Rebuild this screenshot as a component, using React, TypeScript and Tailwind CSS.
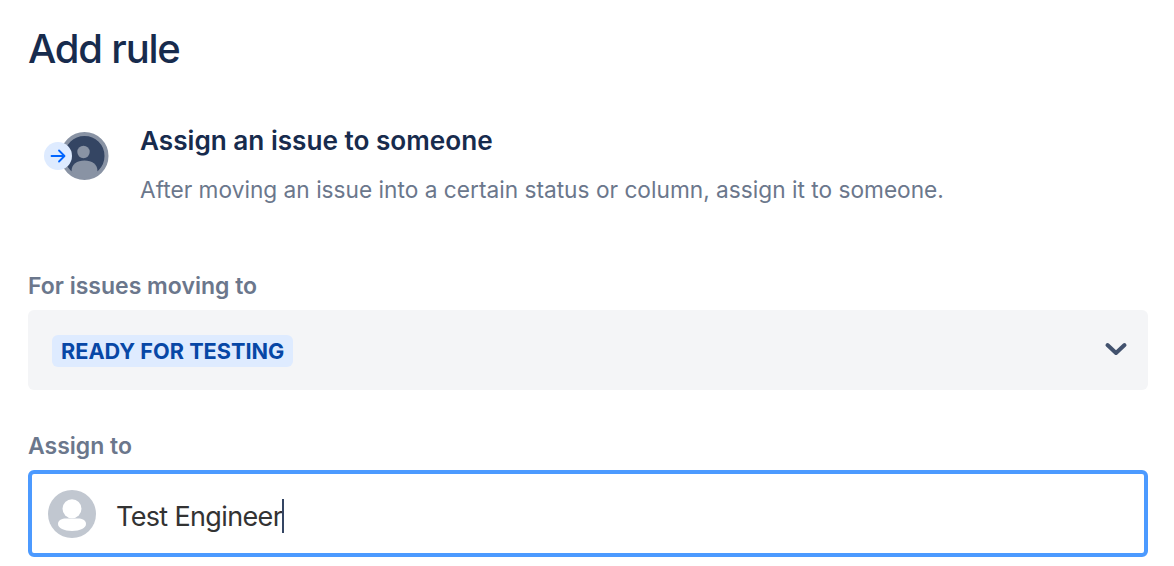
const font = { fontFamily: "Inter, 'Noto Sans', sans-serif" };

function RuleIcon() {
  return (
    <svg width="70" height="52" viewBox="0 0 70 52" className="shrink-0">
      <circle cx="42.5" cy="26" r="22" fill="#344563" stroke="#8993A4" strokeWidth="4" />
      <circle cx="41.5" cy="22" r="6.2" fill="#8993A4" />
      <path d="M29.5 41.5 C29.5 34 35 30.5 42.5 30.5 C50 30.5 55.5 34 55.5 41.5 C52.5 45.5 47.5 47.5 42.5 47.5 C37.5 47.5 32.5 45.5 29.5 41.5 Z" fill="#8993A4" />
      <circle cx="16" cy="26" r="14" fill="#DEEBFF" />
      <path d="M9.5 26 H22 M17 20.5 L22.5 26 L17 31.5" fill="none" stroke="#0065FF" strokeWidth="1.8" strokeLinecap="round" strokeLinejoin="round" />
    </svg>
  );
}

function UserAvatar() {
  return (
    <svg width="48" height="48" viewBox="0 0 48 48" className="shrink-0">
      <circle cx="24" cy="24" r="24" fill="#C1C7D0" />
      <circle cx="24" cy="18.7" r="9.5" fill="#fff" />
      <path d="M10 34 C10 30 14 28.5 18 28.5 H30 C34 28.5 38 30 38 34 C38 38 32 41 24 41 C16 41 10 38 10 34 Z" fill="#fff" />
    </svg>
  );
}

export default function App() {
  return (
    <div className="h-[566px] w-[1174px] overflow-hidden bg-white pl-[28px] pr-[26px] pt-[25px]" style={font}>
      <h1 className="text-[40px] font-[550] leading-[48px] tracking-[-1.2px] text-[#172b4d]">Add rule</h1>

      <div className="mt-[50px] flex h-[79px] items-start">
        <div className="mt-[7px] w-[112px] pl-[14px]">
          <RuleIcon />
        </div>
        <div>
          <h2 className="text-[26.15px] font-semibold leading-[36px] text-[#172b4d]">Assign an issue to someone</h2>
          <p className="mt-[17px] text-[22.7px] leading-[28px] text-[#6b778c]">
            After moving an issue into a certain status or column, assign it to someone.
          </p>
        </div>
      </div>

      <label className="mt-[68px] block text-[23px] font-semibold leading-[32px] text-[#6b778c]">For issues moving to</label>
      <div className="mt-[8px] flex h-[80px] items-center justify-between rounded-[6px] bg-[#f4f5f7] pl-[24px] pr-[20px]">
        <span className="mt-[2px] rounded-[6px] bg-[#deebff] px-[9px] text-[21.7px] font-bold leading-[32px] text-[#0747a6]">READY FOR TESTING</span>
        <svg width="24" height="16" viewBox="0 0 24 16" className="mb-[2px]">
          <path d="M3.5 4 L12 12 L20.5 4" fill="none" stroke="#42526E" strokeWidth="4" strokeLinecap="round" strokeLinejoin="round" />
        </svg>
      </div>

      <label className="mt-[40px] block text-[23px] font-semibold leading-[32px] text-[#6b778c]">Assign to</label>
      <div className="mt-[8px] flex h-[87px] items-center rounded-[6px] border-[4px] border-[#4c9aff] pl-[16px]">
        <UserAvatar />
        <span className="ml-[20px] pt-[6px] text-[27px] leading-[36px] tracking-[-0.65px] text-[#333333]">Test Engineer</span>
        <span className="mt-[4px] h-[34px] w-[2px] bg-[#344563]" />
      </div>
    </div>
  );
}
